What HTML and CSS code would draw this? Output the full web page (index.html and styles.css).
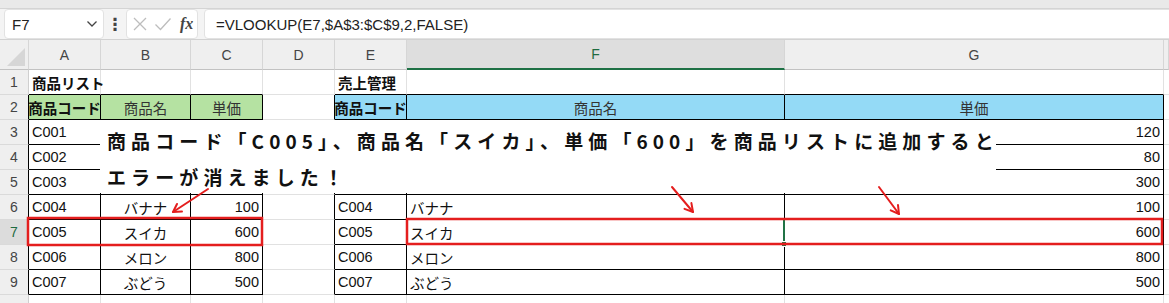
FILE: index.html
```html
<!DOCTYPE html>
<html lang="ja">
<head>
<meta charset="utf-8">
<title>VLOOKUP</title>
<link rel="stylesheet" href="styles.css">
</head>
<body>
<div class="topband"></div>
<div class="fbar">
  <div class="namebox"><span>F7</span>
    <svg class="chev" width="12" height="8" viewBox="0 0 12 8"><path d="M1.5 1.5 L6 6 L10.5 1.5" fill="none" stroke="#444" stroke-width="1.3"/></svg>
  </div>
  <div class="kebab">⋮</div>
  <div class="btnbox">
    <svg width="16" height="16" viewBox="0 0 16 16"><path d="M2 2 L14 14 M14 2 L2 14" stroke="#bdbdbd" stroke-width="1.3" fill="none"/></svg>
    <svg width="18" height="16" viewBox="0 0 18 16"><path d="M1.5 8.5 L6.5 13.5 L16.5 2.5" stroke="#bdbdbd" stroke-width="1.3" fill="none"/></svg>
    <span class="fx">fx</span>
  </div>
  <div class="formula">=VLOOKUP(E7,$A$3:$C$9,2,FALSE)</div>
</div>

<div class="sheet">
  <div class="row hdr">
    <div class="ch corner"><svg width="18" height="18" viewBox="0 0 18 18"><path d="M18 0 L18 18 L0 18 Z" fill="#d6d6d6"/></svg></div>
    <div class="ch">A</div><div class="ch">B</div><div class="ch">C</div><div class="ch">D</div><div class="ch">E</div>
    <div class="ch chs">F</div><div class="ch">G</div><div class="ch"></div>
  </div>

  <div class="row">
    <div class="c rh">1</div>
    <div class="c kb ov b">商品リスト</div><div class="c kb"></div><div class="c kb"></div>
    <div class="c"></div>
    <div class="c kb ov b">売上管理</div><div class="c kb"></div><div class="c kb"></div><div class="c"></div>
  </div>

  <div class="row">
    <div class="c rh kr">2</div>
    <div class="c k grn ctr b">商品コード</div><div class="c k grn ctr dim">商品名</div><div class="c k grn ctr dim">単価</div>
    <div class="c kr"></div>
    <div class="c k blu ctr b">商品コード</div><div class="c k blu ctr dim">商品名</div><div class="c k blu ctr dim">単価</div><div class="c"></div>
  </div>

  <div class="row">
    <div class="c rh kr">3</div>
    <div class="c k">C001</div><div class="c k"></div><div class="c k"></div>
    <div class="c kr"></div>
    <div class="c k"></div><div class="c k"></div><div class="c k rt">120</div><div class="c"></div>
  </div>

  <div class="row">
    <div class="c rh kr">4</div>
    <div class="c k">C002</div><div class="c k"></div><div class="c k"></div>
    <div class="c kr"></div>
    <div class="c k"></div><div class="c k"></div><div class="c k rt">80</div><div class="c"></div>
  </div>

  <div class="row">
    <div class="c rh kr">5</div>
    <div class="c k">C003</div><div class="c k"></div><div class="c k"></div>
    <div class="c kr"></div>
    <div class="c k"></div><div class="c k"></div><div class="c k rt">300</div><div class="c"></div>
  </div>

  <div class="row">
    <div class="c rh kr">6</div>
    <div class="c k">C004</div><div class="c k ctr">バナナ</div><div class="c k rt">100</div>
    <div class="c kr"></div>
    <div class="c k">C004</div><div class="c k">バナナ</div><div class="c k rt">100</div><div class="c"></div>
  </div>

  <div class="row">
    <div class="c rh kr sel">7</div>
    <div class="c k">C005</div><div class="c k ctr">スイカ</div><div class="c k rt">600</div>
    <div class="c kr"></div>
    <div class="c k">C005</div><div class="c k">スイカ</div><div class="c k rt">600</div><div class="c"></div>
  </div>

  <div class="row">
    <div class="c rh kr">8</div>
    <div class="c k">C006</div><div class="c k ctr">メロン</div><div class="c k rt">800</div>
    <div class="c kr"></div>
    <div class="c k">C006</div><div class="c k">メロン</div><div class="c k rt">800</div><div class="c"></div>
  </div>

  <div class="row">
    <div class="c rh kr">9</div>
    <div class="c k">C007</div><div class="c k ctr">ぶどう</div><div class="c k rt">500</div>
    <div class="c kr"></div>
    <div class="c k">C007</div><div class="c k">ぶどう</div><div class="c k rt">500</div><div class="c"></div>
  </div>

  <div class="row short">
    <div class="c rh"></div>
    <div class="c"></div><div class="c"></div><div class="c"></div><div class="c"></div>
    <div class="c"></div><div class="c"></div><div class="c"></div><div class="c"></div>
  </div>
</div>

<div class="callout">商品コード「C005」、商品名「スイカ」、単価「600」を商品リストに追加すると<br>エラーが消えました！</div>

<svg class="marks" width="1169" height="303" viewBox="0 0 1169 303">
  <rect x="783" y="219" width="2" height="25" fill="#217346"/>
  <rect x="781.5" y="241.5" width="5" height="5" fill="#217346" stroke="#fff" stroke-width="1"/>
  <rect x="28" y="218" width="234" height="27" fill="none" stroke="#e41e1e" stroke-width="2.5"/>
  <rect x="407" y="219" width="755" height="25" fill="none" stroke="#e41e1e" stroke-width="2.5"/>
  <g stroke="#e41e1e" stroke-width="2" fill="none" stroke-linecap="round" stroke-linejoin="round">
    <path d="M208 189 L173 212"/>
    <path d="M182 211.5 L173 212 L177 204"/>
    <path d="M672 187 L693 212"/>
    <path d="M691.4 203.1 L693 212 L684.5 208.9"/>
    <path d="M879 187 L899 214"/>
    <path d="M898 205.1 L899 214 L890.7 210.4"/>
  </g>
</svg>
</body>
</html>
```
FILE: styles.css
```css
html, body {
  margin: 0;
  padding: 0;
}
body {
  width: 1169px;
  height: 303px;
  overflow: hidden;
  background: #fff;
  position: relative;
  font-family: "Liberation Sans", "Noto Sans CJK JP", sans-serif;
  color: #111;
}

.topband {
  height: 8px;
  background: #e9e9e9;
  border-bottom: 1px solid #d4d4d4;
}

.fbar {
  height: 30px;
  background: #f4f4f4;
  border-bottom: 1px solid #d2d2d2;
  display: flex;
  align-items: stretch;
  padding-left: 4px;
}

.namebox {
  width: 100px;
  box-sizing: border-box;
  background: #fff;
  border: 1px solid #e2e2e2;
  border-radius: 4px;
  display: flex;
  align-items: center;
  justify-content: space-between;
  padding: 0 5px 0 7px;
  font-size: 15px;
  color: #222;
}

.kebab {
  width: 22px;
  display: flex;
  align-items: center;
  justify-content: center;
  font-size: 17px;
  font-weight: 700;
  color: #444;
  font-family: "DejaVu Sans", sans-serif;
}

.btnbox {
  width: 72px;
  box-sizing: border-box;
  background: #fff;
  border: 1px solid #e2e2e2;
  border-radius: 4px;
  display: flex;
  align-items: center;
  gap: 6px;
  padding-left: 5px;
}

.fx {
  font-family: "Liberation Serif", serif;
  font-style: italic;
  font-weight: 700;
  font-size: 16px;
  color: #444;
  margin-left: 2px;
}

.formula {
  flex: 1;
  margin-left: 6px;
  margin-right: -10px;
  background: #fff;
  border: 1px solid #e2e2e2;
  border-radius: 4px;
  display: flex;
  align-items: center;
  padding-left: 11px;
  font-size: 15px;
  color: #222;
}

.row {
  display: grid;
  grid-template-columns: 29px 72px 90px 72px 72px 72px 378px 379px 1fr;
  height: 25px;
}
.row.hdr {
  height: 30px;
  background: #efefef;
}
.row.short {
  height: 9px;
}
.row.short .c {
  border-bottom: none;
}

.ch {
  box-sizing: border-box;
  border-right: 1px solid #d6d6d6;
  border-bottom: 1px solid #c2c2c2;
  display: flex;
  align-items: center;
  justify-content: center;
  font-size: 14px;
  color: #444;
}
.ch.corner {
  align-items: flex-end;
  justify-content: flex-end;
  padding: 0 3px 3px 0;
}
.ch.chs {
  background: #dedede;
  color: #1e6b40;
  border-bottom: 2px solid #1e7145;
}

.c {
  box-sizing: border-box;
  border-right: 1px solid #e1e1e1;
  border-bottom: 1px solid #e1e1e1;
  display: flex;
  align-items: center;
  padding: 0 3px;
  font-size: 14.5px;
  white-space: nowrap;
  overflow: hidden;
  color: #111;
}
.c.rh {
  background: #efefef;
  border-right-color: #cfcfcf;
  border-bottom-color: #dadada;
  justify-content: center;
  padding: 0;
  font-size: 14px;
  color: #444;
}
.c.rh.sel {
  background: #dcdcdc;
  color: #1e6b40;
}
.c.k {
  border-right-color: #000;
  border-bottom-color: #000;
}
.c.kr {
  border-right-color: #000;
}
.c.kb {
  border-bottom-color: #000;
}
.c.ov {
  overflow: visible;
}
.c.b {
  font-weight: 700;
}
.c.ctr {
  justify-content: center;
}
.c.rt {
  justify-content: flex-end;
}
.c.dim {
  color: #333;
}
.c.grn {
  background: #b5e2a2;
  padding: 0;
}
.c.blu {
  background: #94daf6;
  padding: 0;
}

.callout {
  position: absolute;
  left: 100px;
  top: 120px;
  width: 896px;
  height: 73px;
  box-sizing: border-box;
  background: #fff;
  padding: 3px 0 0 7px;
  font-family: "Noto Sans CJK JP", sans-serif;
  font-weight: 700;
  font-size: 19px;
  line-height: 36px;
  letter-spacing: 5.1px;
  white-space: nowrap;
  color: #111;
}

.marks {
  position: absolute;
  left: 0;
  top: 0;
  pointer-events: none;
}
```
